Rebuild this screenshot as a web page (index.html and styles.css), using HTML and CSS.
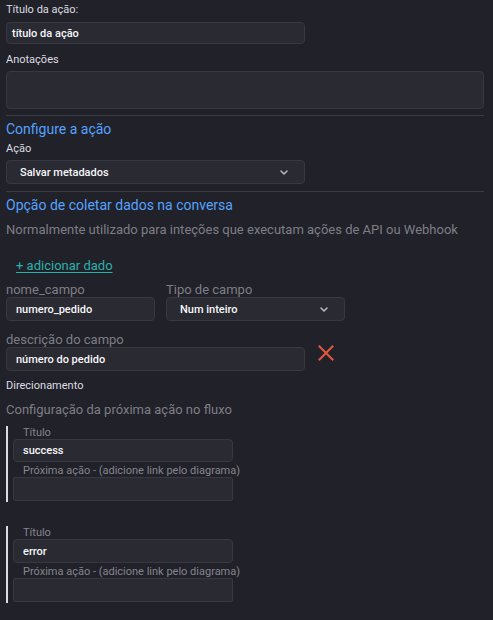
FILE: index.html
```html
<!DOCTYPE html>
<html lang="pt">
<head>
<meta charset="utf-8">
<link rel="stylesheet" href="styles.css">
</head>
<body>
<div class="panel">
  <div class="lbl first">Título da ação:</div>
  <div class="field w299 h22 pad5">título da ação</div>

  <div class="lbl mt9">Anotações</div>
  <div class="area"></div>

  <div class="divider d1"></div>

  <div class="heading h-config">Configure a ação</div>
  <div class="lbl mt4">Ação</div>
  <div class="select w299 sel1">
    <span>Salvar metadados</span>
    <svg class="chev" width="8" height="5" viewBox="0 0 8 5"><path d="M1 1 L4 4 L7 1" fill="none" stroke="#b9b9c2" stroke-width="1.5" stroke-linecap="round" stroke-linejoin="round"/></svg>
  </div>

  <div class="divider d2"></div>

  <div class="heading h-opt">Opção de coletar dados na conversa</div>
  <div class="muted m-norm">Normalmente utilizado para inteções que executam ações de API ou Webhook</div>

  <a class="add" href="#">+ adicionar dado</a>

  <div class="row r-fields">
    <div class="col c-name">
      <div class="glbl">nome_campo</div>
      <div class="field h24 pad9 w149">numero_pedido</div>
    </div>
    <div class="col c-type">
      <div class="glbl">Tipo de campo</div>
      <div class="select w179">
        <span>Num inteiro</span>
        <svg class="chev" width="8" height="5" viewBox="0 0 8 5"><path d="M1 1 L4 4 L7 1" fill="none" stroke="#b9b9c2" stroke-width="1.5" stroke-linecap="round" stroke-linejoin="round"/></svg>
      </div>
    </div>
  </div>

  <div class="row r-desc">
    <div class="col">
      <div class="glbl">descrição do campo</div>
      <div class="field h24 pad9 w299">número do pedido</div>
    </div>
    <svg class="xicon" width="16" height="16" viewBox="0 0 16 16"><path d="M1.5 1.5 L14.5 14.5 M14.5 1.5 L1.5 14.5" stroke="#e2583f" stroke-width="2" stroke-linecap="square"/></svg>
  </div>

  <div class="lbl l-dir">Direcionamento</div>
  <div class="muted m-conf">Configuração da próxima ação no fluxo</div>

  <div class="route r1">
    <div class="rlbl">Título</div>
    <div class="field h23 pad9 w220">success</div>
    <div class="rlbl mt2">Próxima ação - (adicione link pelo diagrama)</div>
    <div class="box"></div>
  </div>

  <div class="route r2">
    <div class="rlbl">Título</div>
    <div class="field h24 pad9 w220">error</div>
    <div class="rlbl mt2">Próxima ação - (adicione link pelo diagrama)</div>
    <div class="box"></div>
  </div>
</div>
</body>
</html>
```

FILE: styles.css
```css
html, body {
  margin: 0;
  padding: 0;
  background: #212129;
}

body {
  font-family: Roboto, "Noto Sans", "Liberation Sans", sans-serif;
  color: #e6e6ea;
  width: 493px;
  height: 620px;
  overflow: hidden;
}

.panel {
  padding: 0 9px 0 6px;
}

.lbl {
  font-size: 11px;
  line-height: 14px;
  color: #dcdce2;
}

.lbl.first { padding-top: 3px; margin-bottom: 5px; }
.mt9 { margin-top: 9px; margin-bottom: 4px; }
.mt4 { margin-top: 4px; margin-bottom: 4px; }
.mt2 { margin-top: 2px; }

.field {
  box-sizing: border-box;
  background: #2a2a33;
  border: 1px solid #383842;
  border-radius: 4px;
  font-size: 11px;
  font-weight: 500;
  color: #f6f6f8;
  display: flex;
  align-items: center;
}

.h22 { height: 22px; }
.h23 { height: 23px; }
.h24 { height: 24px; }
.pad5 { padding-left: 5px; }
.pad9 { padding-left: 9px; }
.w299 { width: 299px; }
.w149 { width: 149px; }
.w179 { width: 179px; }
.w220 { width: 220px; }

.area {
  box-sizing: border-box;
  height: 38px;
  background: #2a2a33;
  border: 1px solid #383842;
  border-radius: 4px;
}

.divider {
  height: 1px;
  background: #3b3b44;
}

.d1 { margin-top: 6px; }
.d2 { margin-top: 7px; }

.heading {
  font-size: 14px;
  line-height: 18px;
  color: #55a3ff;
  margin-top: 4px;
}

.select {
  box-sizing: border-box;
  height: 24px;
  background: #2a2a33;
  border: 1px solid #383842;
  border-radius: 4px;
  font-size: 11px;
  font-weight: 500;
  color: #f6f6f8;
  display: flex;
  align-items: center;
  justify-content: space-between;
  padding: 0 16px 0 13px;
}

.chev { display: block; }

.muted {
  font-size: 13px;
  line-height: 18px;
  color: #7e7e86;
  white-space: nowrap;
}

.m-norm { margin-top: 7px; }

.add {
  display: inline-block;
  margin: 18px 0 0 10px;
  font-size: 13px;
  line-height: 18px;
  color: #2bb0aa;
  text-decoration: underline;
  text-underline-offset: 2px;
}

.row {
  display: flex;
}

.r-fields {
  margin-top: 8px;
  gap: 11px;
}

.col {
  display: flex;
  flex-direction: column;
}

.glbl {
  font-size: 13px;
  line-height: 14px;
  color: #7e7e86;
}

.r-desc {
  margin-top: 12px;
  align-items: flex-start;
}

.xicon {
  margin: 12px 0 0 13px;
}

.l-dir { margin-top: 8px; }
.m-conf { margin-top: 8px; }

.route {
  border-left: 2px solid #dcdce0;
  padding-left: 5px;
  padding-bottom: 1px;
  width: 220px;
}

.r1 { margin-top: 7px; }
.r2 { margin-top: 24px; }

.rlbl {
  font-size: 11px;
  line-height: 13px;
  color: #85858d;
  padding-left: 10px;
  white-space: nowrap;
}

.box {
  box-sizing: border-box;
  height: 24px;
  width: 220px;
  background: #2a2a33;
  border: 1px solid #383842;
  border-radius: 2px;
}
```
